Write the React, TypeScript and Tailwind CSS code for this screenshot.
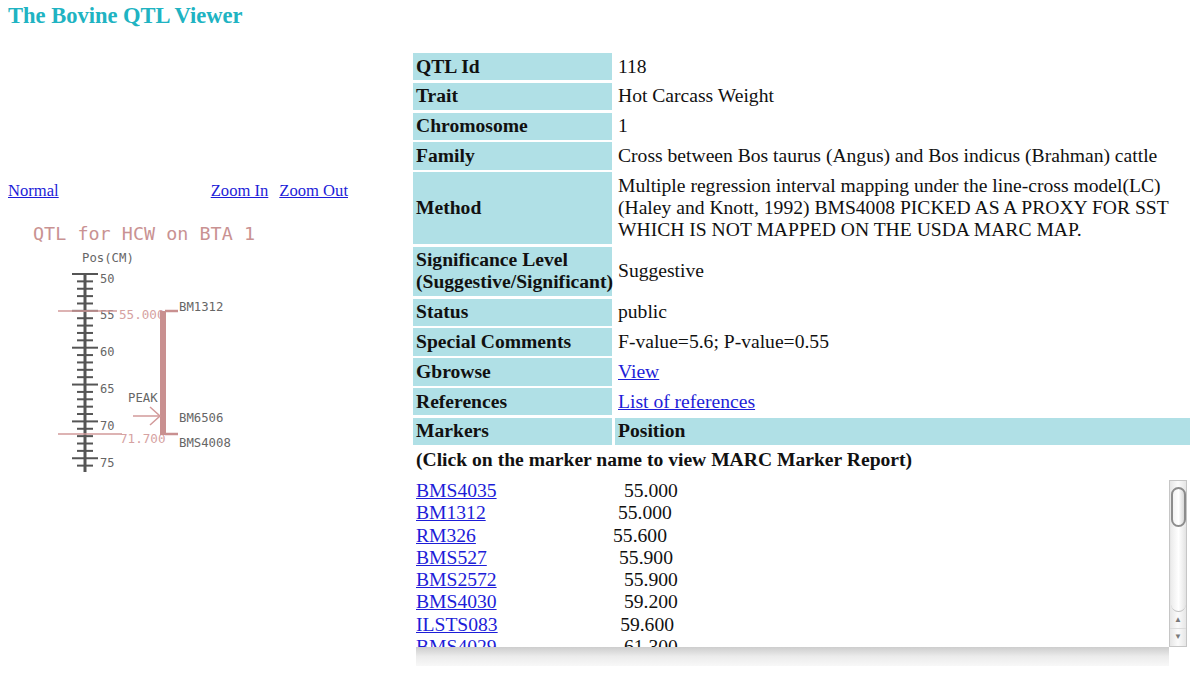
import React from 'react';

type Row = {
  label: React.ReactNode,
  value: React.ReactNode,
  header?: boolean,
}

const linkCls = "text-[#1d1dd8] underline";

const rows: Row[] = [
  { label: "QTL Id", value: "118" },
  { label: "Trait", value: "Hot Carcass Weight" },
  { label: "Chromosome", value: "1" },
  { label: "Family", value: "Cross between Bos taurus (Angus) and Bos indicus (Brahman) cattle" },
  {
    label: "Method",
    value: (
      <>
        Multiple regression interval mapping under the line-cross model(LC)<br />
        (Haley and Knott, 1992) BMS4008 PICKED AS A PROXY FOR SST<br />
        WHICH IS NOT MAPPED ON THE USDA MARC MAP.
      </>
    ),
  },
  { label: <>Significance Level<br />(Suggestive/Significant)</>, value: "Suggestive" },
  { label: "Status", value: "public" },
  { label: "Special Comments", value: "F-value=5.6; P-value=0.55" },
  { label: "Gbrowse", value: <a href="#" className={linkCls}>View</a> },
  { label: "References", value: <a href="#" className={linkCls}>List of references</a> },
  { label: "Markers", value: "Position", header: true },
];

const markers = [
  ["BMS4035", "55.000"],
  ["BM1312", "55.000"],
  ["RM326", "55.600"],
  ["BMS527", "55.900"],
  ["BMS2572", "55.900"],
  ["BMS4030", "59.200"],
  ["ILSTS083", "59.600"],
  ["BMS4029", "61.300"],
  ["BM6506", "70.000"],
  ["BMS4008", "71.700"],
];

const yOf = (cm: number) => 274 + (cm - 50) * 7.37;

const QtlChart: React.FC = () => {
  const ticks = Array.from({ length: 27 }, (_, i) => 50 + i);
  const mono = "DejaVu Sans Mono, Liberation Mono, monospace";
  return (
    <svg width="400" height="275" viewBox="0 205 400 275" className="block">
      <text x="33" y="240" fontFamily={mono} fontSize="18.4" fill="#c99292" textLength="222">
        QTL for HCW on BTA 1
      </text>
      <text x="82" y="262" fontFamily={mono} fontSize="12.3" fill="#666">Pos(CM)</text>

      {/* axis */}
      <line x1="85" y1="273" x2="85" y2="472" stroke="#555" strokeWidth="3" />
      {ticks.map((cm) => {
        const y = yOf(cm);
        const major = cm % 5 === 0;
        return (
          <g key={cm}>
            <line x1={major ? 72 : 77} y1={y} x2={major ? 98 : 93} y2={y} stroke="#555" strokeWidth="2" />
            {major && cm <= 75 && (
              <text x="100" y={y + 8.5} fontFamily={mono} fontSize="12" fill="#666">{cm}</text>
            )}
          </g>
        );
      })}

      {/* flanking lines */}
      <line x1="58" y1="311" x2="117" y2="311" stroke="#d29a9a" strokeWidth="1.5" />
      <line x1="58" y1="434" x2="122" y2="434" stroke="#d29a9a" strokeWidth="1.5" />
      <text x="119" y="319" fontFamily={mono} fontSize="12.6" fill="#d6a2a2">55.000</text>
      <text x="120" y="443" fontFamily={mono} fontSize="12.6" fill="#d6a2a2">71.700</text>

      {/* QTL bar */}
      <rect x="160" y="311" width="6" height="124" fill="#c99090" />
      <line x1="165" y1="311" x2="178" y2="311" stroke="#c99090" strokeWidth="2.5" />
      <line x1="165" y1="434" x2="178" y2="434" stroke="#c99090" strokeWidth="2.5" />

      {/* peak arrow */}
      <text x="128" y="402" fontFamily={mono} fontSize="12.3" fill="#666">PEAK</text>
      <line x1="133" y1="416" x2="160" y2="416" stroke="#d29a9a" strokeWidth="1.5" />
      <polyline points="150,407 160,416 150,425" fill="none" stroke="#d29a9a" strokeWidth="1.5" />

      <text x="179" y="311" fontFamily={mono} fontSize="12.3" fill="#666">BM1312</text>
      <text x="179" y="422" fontFamily={mono} fontSize="12.3" fill="#666">BM6506</text>
      <text x="179" y="447" fontFamily={mono} fontSize="12.3" fill="#666">BMS4008</text>
    </svg>
  );
};

const Scrollbar: React.FC = () => (
  <div className="w-[18px] h-[167px] border border-[#c6c6c6] bg-gradient-to-r from-[#e6e6e6] via-[#fbfbfb] to-[#e6e6e6] flex flex-col items-center">
    <div className="mt-[6px] w-[15px] h-[40px] rounded-full border-2 border-[#8c8c8c] bg-gradient-to-r from-[#f2f2f2] via-white to-[#d8d8d8]" />
    <div className="flex-1 w-[15px] rounded-b-full border-b border-[#c0c0c0] bg-gradient-to-r from-[#ececec] via-white to-[#e2e2e2]" />
    <div className="h-[17px] w-full flex items-center justify-center text-[8px] leading-none text-[#7a7a7a] border-b border-[#dcdcdc]">▲</div>
    <div className="h-[17px] w-full flex items-center justify-center text-[8px] leading-none text-[#7a7a7a]">▼</div>
  </div>
);

const App: React.FC = () => {
  return (
    <div className="w-[1200px] h-[676px] bg-white text-[#111] font-['Liberation_Serif','Times_New_Roman',serif] overflow-hidden">
      <h1 className="h-[53px] pl-[8px] pt-[2.5px] text-[22.5px] leading-[26px] font-bold text-[#20b3c2]">
        The Bovine QTL Viewer
      </h1>

      <div className="flex">
        <div className="w-[413px] pt-[128px]">
          <div className="flex w-[348px] pl-[8px] h-[20px] text-[16.6px] leading-[20px]">
            <a href="#" className={linkCls}>Normal</a>
            <div className="ml-auto flex gap-[11px]">
              <a href="#" className={linkCls}>Zoom In</a>
              <a href="#" className={linkCls}>Zoom Out</a>
            </div>
          </div>
          <div className="mt-[4px]">
            <QtlChart />
          </div>
        </div>

        <div className="w-[777px] text-[19.6px] leading-[22.3px]">
          <div className="grid grid-cols-[199px_575px] gap-x-[3px] gap-y-[2.5px]">
            {rows.map((r, i) => (
              <React.Fragment key={i}>
                <div className="bg-[#b0e0e6] px-[3px] py-[2.5px] font-bold whitespace-nowrap flex items-center">
                  {r.label}
                </div>
                <div className={r.header
                  ? "bg-[#b0e0e6] px-[3px] py-[2.5px] font-bold whitespace-nowrap flex items-center"
                  : "px-[3px] py-[2.5px] whitespace-nowrap flex items-center"}>
                  <div>{r.value}</div>
                </div>
              </React.Fragment>
            ))}
          </div>

          <div className="mt-[4px] pl-[3px] font-bold">
            (Click on the marker name to view MARC Marker Report)
          </div>

          <div className="mt-[8.5px] ml-[3px] flex w-[771px]">
            <div className="flex-1 flex flex-col">
              <div className="h-[167px] overflow-hidden">
                {markers.map(([name, pos]) => (
                  <div key={name} className="whitespace-pre">
                    <a href="#" className={linkCls}>{name}</a>
                    {" ".repeat(33 - name.length)}{pos}
                  </div>
                ))}
              </div>
              <div className="h-[19px] bg-gradient-to-b from-[#cdcdcd] via-[#ececec] to-[#f8f8f8]" />
            </div>
            <Scrollbar />
          </div>
        </div>
      </div>
    </div>
  );
};

export default App;
